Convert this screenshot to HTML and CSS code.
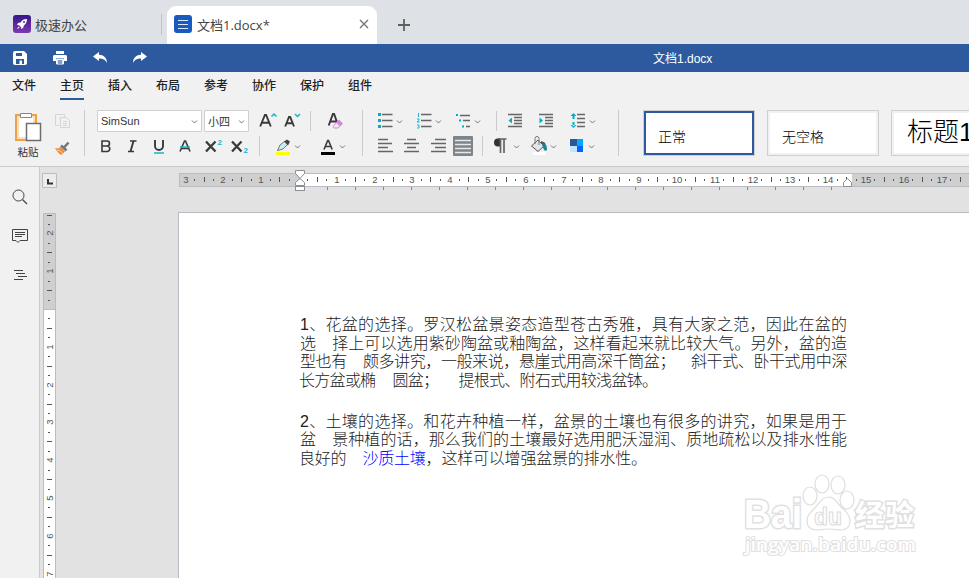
FILE: index.html
```html
<!DOCTYPE html>
<html lang="zh-CN">
<head>
    <meta charset="UTF-8">
    <title>文档1.docx</title>
    <link rel="stylesheet" href="styles.css">
</head>
<body>
    <!-- Window tabs -->
    <div class="tabs">
        <div class="tab home">
            <svg width="18" height="18" viewBox="0 0 18 18">
                <defs><linearGradient id="purple" x1="0" y1="0" x2="0" y2="1"><stop offset="0" stop-color="#35178b"/><stop offset="1" stop-color="#7e39af"/></linearGradient></defs>
                <rect width="18" height="18" rx="3" fill="url(#purple)"/>
                <path d="M14 4c-3 0-5 1-6.500 3.500L5 8 4 10l2 .3L8.300 12.500 8 14l2.200-1 .6-2.500C13 9 14 7 14 4zM5.500 11.500 4 14l2.700-1.300z" fill="#fff"/>
                <circle cx="11" cy="7" r="1" fill="#5a2aa0"/>
            </svg>
            <span>极速办公</span>
        </div>
        <div class="tab active">
            <svg width="18" height="18" viewBox="0 0 18 18">
                <rect width="18" height="18" rx="3" fill="#185abd"/>
                <path d="M4 5.500h10M4 9.500h10M4 13.500h10" stroke="#dce8f8" stroke-width="1"/>
            </svg>
            <span>文档1.docx*</span>
            <svg class="close" width="10" height="10" viewBox="0 0 10 10"><path d="M1 1l8 8M9 1L1 9" stroke="#777" stroke-width="1.400"/></svg>
        </div>
        <svg class="new-tab" width="12" height="12" viewBox="0 0 12 12"><path d="M6 0v12M0 6h12" stroke="#606060" stroke-width="1.800"/></svg>
    </div>

    <!-- Quick access bar -->
    <div class="quick">
        <svg width="14" height="14" viewBox="0 0 14 14"><path d="M2 0h9l3 3v9a2 2 0 0 1-2 2H2a2 2 0 0 1-2-2V2a2 2 0 0 1 2-2z" fill="#fff"/><path d="M3 2h6v3H3zM3 8h8v5H3z" fill="#2d5a9e"/><path d="M6.500 9.500h2.500V13H6.500z" fill="#fff"/></svg>
        <svg width="14" height="14" viewBox="0 0 14 14"><path d="M3 0h8v3H3zM1 4h12l1 1v5h-3V7.500H3V10H0V5z" fill="#fff"/><path d="M3.500 8.500h7V13h-7z" fill="#dce6f4" stroke="#fff"/><path d="M5 10h4M5 12h4" stroke="#2d5a9e"/></svg>
        <svg width="14" height="12" viewBox="0 0 14 12"><path d="M0 4.500 6 0v2.800c4.500 0 8 3 8 8.200-2-3.500-4-4.500-8-4.500V9z" fill="#fff"/></svg>
        <svg width="14" height="12" viewBox="0 0 14 12"><path d="M14 4.500 8 0v2.800C3.500 2.800 0 5.800 0 11c2-3.500 4-4.500 8-4.500V9z" fill="#fff"/></svg>
        <span class="title">文档1.docx</span>
    </div>

    <!-- Menu -->
    <div class="menu">
        <span>文件</span>
        <span class="current">主页</span>
        <span>插入</span>
        <span>布局</span>
        <span>参考</span>
        <span>协作</span>
        <span>保护</span>
        <span>组件</span>
    </div>

    <!-- Toolbar -->
    <div class="toolbar">
        <div class="paste">
            <svg width="28" height="30" viewBox="0 0 28 30">
                <path d="M2 3h20v25H2z" fill="#fff" stroke="#f0a04b" stroke-width="2"/>
                <path d="M4 5h16v21H4z" fill="none" stroke="#fbe1bb" stroke-width="2"/>
                <path d="M6.500 1.500h11v4h-11z" fill="#fff" stroke="#888"/>
                <path d="M12.500 11.500h14v17h-14z" fill="#fff" stroke="#6d6e71" stroke-width="1.500"/>
            </svg>
            <span>粘贴</span>
        </div>
        <div class="clip">
            <svg width="16" height="15" viewBox="0 0 16 15"><path d="M4 11.500H.5V.5h9V3M5.500 3.500h6l3 3v7h-9zM8 7.500h4M8 9.500h4M8 11.500h4" fill="none" stroke="#d5d5d5"/></svg>
            <svg width="16" height="16" viewBox="0 0 16 16"><path d="M0 7l3 .5L5.500 6l4.500 4.500L6.500 14C4 13 2 10.500 0 7z" fill="#f28c38"/><path d="M2 9c3 .5 5 2 6 4" stroke="#fbd3ae" stroke-width="1" fill="none"/><path d="M6 4.500l5.500 5M9 6.500 13.500 1.500" stroke="#777" stroke-width="2.600"/></svg>
        </div>
        <i class="sep tall"></i>

        <div class="group font">
            <div class="row">
                <div class="combo">SimSun<svg class="caret"><use href="#caret"/></svg></div>
                <div class="combo size">小四<svg class="caret"><use href="#caret"/></svg></div>
                <svg class="icon"><path d="M2.200 15.500 6.900 4h1.200L12.800 15.500M4 11.700h7" class="letter"/><path d="M13.500 5.500l2.500-2.500 2.500 2.500" class="cyan"/></svg>
                <svg class="icon"><path d="M3.200 15.500 7 6h1.200L12 15.500M4.500 12.200h6" class="letter"/><path d="M13 3 15.500 5.500 18 3" class="cyan"/></svg>
                <i class="sep"></i>
                <svg class="icon"><path d="M2.700 14.500 6.900 3h1.200L12 14M4.500 10.500h6" class="letter"/><path d="M7 15.500 11 11l5 2-4 4H8z" fill="#f7e8f8" stroke="#d48ad8"/><path d="M13 8.500l4 4-3 3-4-4z" fill="#d48ad8"/></svg>
            </div>
            <div class="row two">
                <svg class="icon"><path d="M6 5h5a2.500 2.500 0 0 1 0 5H6zM6 10h5.500a2.800 2.800 0 0 1 0 5.500H6z" class="letter thin"/></svg>
                <svg class="icon"><path d="M8 5h6.500M6 15.500h6" class="letter thin"/><path d="M11.500 5 8.500 15.500" class="letter"/></svg>
                <svg class="icon"><path d="M6 4v6a4 4 0 0 0 8 0V4" class="letter"/><path d="M5 17h10" class="cyan"/></svg>
                <svg class="icon"><path d="M5 15.500 9.500 5h1l4.500 10.500M7 12.500h6" class="letter thin"/><path d="M5 11h10" class="cyan"/></svg>
                <svg class="icon"><path d="M3 5.500l9.500 10M12.500 5.500l-9.500 10" class="letter bold"/><text x="14.500" y="8.500">2</text></svg>
                <svg class="icon"><path d="M3 5.500l9.500 10M12.500 5.500l-9.500 10" class="letter bold"/><text x="14.500" y="17">2</text></svg>
                <i class="sep"></i>
                <div class="split">
                    <svg class="icon"><path d="M4.500 14.500 7 9l5-4 3 3-5 5z" fill="#c8edf2" stroke="#777"/><path d="M11 5.500 14 3.500l3 2-2 4z" fill="#444"/><path d="M3 16h14v3H3z" fill="#ff0"/></svg>
                    <svg class="caret"><use href="#caret"/></svg>
                </div>
                <div class="split">
                    <svg class="icon"><path d="M6 13.500 9.700 4.500h.8l3.700 9M7.500 10.500h5.500" class="letter thin"/><path d="M3 16h14v3H3z" fill="#000"/></svg>
                    <svg class="caret"><use href="#caret"/></svg>
                </div>
            </div>
        </div>
        <i class="sep tall"></i>

        <div class="group para">
            <div class="row">
                <div class="split">
                    <svg class="icon"><path d="M7 3.500h10.500M7 9.500h10.500M7 15.500h10.500" class="line"/><path d="M3 3.500h3M3 9.500h3M3 15.500h3" class="dot"/></svg>
                    <svg class="caret"><use href="#caret"/></svg>
                </div>
                <div class="split">
                    <svg class="icon"><path d="M7 3.500h10.500M7 9.500h10.500M7 15.500h10.500" class="line"/><path d="M4.500 2v4M3 8h2v1.500L3 11h2.500M3 14h2v3H3" class="cyan thin"/></svg>
                    <svg class="caret"><use href="#caret"/></svg>
                </div>
                <div class="split">
                    <svg class="icon"><path d="M7 4.500h10M10 9.500h7M13 15.500h4" class="line"/><path d="M3 4h2M6 9.500h2M9 15.500h2" class="dot small"/></svg>
                    <svg class="caret"><use href="#caret"/></svg>
                </div>
                <i class="sep"></i>
                <svg class="icon"><path d="M2 3.500h14M8 6.500h8M8 9.500h8M8 12.500h8M2 15.500h14" class="line"/><path d="M6 6.500v6l-3.500-3z" fill="#00aec7"/></svg>
                <svg class="icon"><path d="M2 3.500h14M8 6.500h8M8 9.500h8M8 12.500h8M2 15.500h14" class="line"/><path d="M2.500 6.500v6L6 9.500z" fill="#00aec7"/></svg>
                <div class="split">
                    <svg class="icon"><path d="M9 3.500h8M9 7.500h8M9 11.500h8M9 15.500h8" class="line"/><path d="M5.500 2 8.500 5h-6zM5.500 17l3-3h-6zM4.500 4h2v4h-2zM4.500 11h2v4h-2z" fill="#00aec7"/></svg>
                    <svg class="caret"><use href="#caret"/></svg>
                </div>
            </div>
            <div class="row two">
                <svg class="icon"><path d="M3 3.500h10M3 7.500h14M3 11.500h10M3 15.500h15" class="line"/></svg>
                <svg class="icon"><path d="M6 3.500h9M3 7.500h15M6 11.500h9M3 15.500h15" class="line"/></svg>
                <svg class="icon"><path d="M7 3.500h11M3 7.500h15M7 11.500h11M3 15.500h15" class="line"/></svg>
                <svg class="icon"><rect width="20" height="20" rx="1" fill="#7d858c"/><path d="M2 4.500h16M2 8.500h16M2 12.500h16M2 16.500h16" stroke="#e8e8e8" stroke-width="1.500"/></svg>
                <i class="sep"></i>
                <div class="split wide">
                    <svg class="icon"><path d="M10 2.500H8a3.700 3.700 0 0 0 0 8h2z" fill="#333"/><path d="M8 3h8.500" stroke="#555" stroke-width="1.400"/><path d="M10.500 3v14M14 3v14" stroke="#666" stroke-width="1.700"/></svg>
                    <svg class="caret"><use href="#caret"/></svg>
                </div>
                <div class="split">
                    <svg class="icon"><path d="M4 16h13v3H4z" fill="#fff"/><path d="M2.500 10 9 4l6 6-6 5.500z" fill="#e4e4e4" stroke="#555"/><path d="M6 8V2.500a2 2 0 0 1 4 0V9" fill="none" stroke="#777"/><path d="M12 6c4 0 6 3 6 8-1 1-2 1-3 0z" fill="#138a9c"/><path d="M12 6l4 2" stroke="#555" stroke-width="2"/></svg>
                    <svg class="caret"><use href="#caret"/></svg>
                </div>
                <div class="split">
                    <svg class="icon"><path d="M3 3h7v7H3z" fill="#2b579a"/><path d="M10 3h6v7h-6z" fill="#00a8ff"/><path d="M3 10h7v6H3z" fill="#c0e6ff"/><path d="M10 10h6v6h-6z" fill="#0066ff"/></svg>
                    <svg class="caret"><use href="#caret"/></svg>
                </div>
            </div>
        </div>
        <i class="sep tall"></i>

        <div class="styles">
            <div class="style selected">正常</div>
            <div class="style">无空格</div>
            <div class="style heading">标题1</div>
        </div>
    </div>

    <svg class="defs"><symbol id="caret" viewBox="0 0 9 9"><path d="M2 3.500 4.500 6 7 3.500" fill="none" stroke="#777"/></symbol></svg>

    <!-- Editor -->
    <div class="workspace">
        <div class="side">
            <svg width="16" height="16" viewBox="0 0 16 16"><circle cx="6.500" cy="6.500" r="5.500" fill="none" stroke="#444"/><path d="M10.500 10.500 15 15" stroke="#444" stroke-width="1.200"/></svg>
            <svg width="16" height="16" viewBox="0 0 16 16"><path d="M.5 1.500h15v11H8L6 14.500l-2-2H.5zM3 4.500h10M3 6.500h10M3 8.500h7" fill="none" stroke="#444"/></svg>
            <svg width="16" height="16" viewBox="0 0 16 16"><path d="M2 3.500h9M4 6.500h9M6 9.500h9M2 12.500h9" fill="none" stroke="#444"/></svg>
        </div>
        <div class="left-ruler">
            <svg class="tab-stop" width="15" height="15" viewBox="0 0 15 15"><path d="M.5.5h14v14H.5z" fill="#ececec" stroke="#b9bdc3"/><path d="M6 6v4.500h5" fill="none" stroke="#333" stroke-width="2"/></svg>
            <svg id="vruler" width="13" height="365"></svg>
        </div>
        <div class="canvas">
            <svg id="hruler" width="790" height="24"></svg>
            <div class="page">
                <div class="paragraph">
                    <p>1、花盆的选择。罗汉松盆景姿态造型苍古秀雅，具有大家之范，因此在盆的</p>
                    <p>选<i class="gap"></i>择上可以选用紫砂陶盆或釉陶盆，这样看起来就比较大气。另外，盆的造</p>
                    <p class="tight">型也有<i class="gap"></i>颇多讲究，一般来说，悬崖式用高深千筒盆；<i class="gap"></i>斜干式、卧干式用中深</p>
                    <p class="tighter last">长方盆或椭<i class="gap"></i>圆盆；<i class="gap wide"></i>提根式、附石式用较浅盆钵。</p>
                </div>
                <div class="paragraph">
                    <p>2、土壤的选择。和花卉种植一样，盆景的土壤也有很多的讲究，如果是用于</p>
                    <p>盆<i class="gap"></i>景种植的话，那么我们的土壤最好选用肥沃湿润、质地疏松以及排水性能</p>
                    <p class="snug last">良好的<i class="gap"></i><a>沙质土壤</a>，这样可以增强盆景的排水性。</p>
                </div>
            </div>
        </div>
    </div>

    <!-- Watermark -->
    <svg class="watermark" width="190" height="90" viewBox="0 0 190 90">
        <g fill="#fff" stroke="#dedede" stroke-width="1.200">
            <ellipse cx="69" cy="26" rx="7" ry="9"/>
            <ellipse cx="81" cy="14" rx="7" ry="9"/>
            <ellipse cx="97" cy="15" rx="7" ry="9"/>
            <ellipse cx="106" cy="30" rx="7" ry="9"/>
            <path d="M88 27c6 0 8 6 13 11 5 4 8 8 8 13 0 6-4 9-9 9-5 0-7-1-12-1s-8 1-12 1c-6 0-10-3-10-9s4-9 8-13c4-5 7-11 14-11z"/>
            <text x="73" y="55" font-size="24" font-weight="bold" textLength="28" lengthAdjust="spacingAndGlyphs">du</text>
        </g>
        <g class="outlined">
            <text x="3" y="58" font-size="40" font-weight="bold" textLength="58" lengthAdjust="spacingAndGlyphs">Bai</text>
            <text x="114" y="56" font-size="29" class="cn" textLength="59">经验</text>
            <text x="4" y="81" font-size="18" class="address" textLength="171" lengthAdjust="spacingAndGlyphs">jingyan.baidu.com</text>
        </g>
    </svg>

    <script src="rulers.js"></script>
</body>
</html>
```

FILE: styles.css
```css
body {
    margin: 0;
    width: 969px;
    height: 578px;
    overflow: hidden;
    position: relative;
    display: flex;
    flex-direction: column;
    font-family: "Liberation Sans", "Noto Sans CJK SC", sans-serif;
    font-size: 12px;
    color: #333;
    background-color: #f1f1f1;
}
svg {
    display: block;
    flex: none;
}
.defs {
    position: absolute;
    width: 0;
    height: 0;
}

/* Tabs */
.tabs {
    flex: none;
    height: 44px;
    box-sizing: border-box;
    padding-top: 6px;
    display: flex;
    background-color: #dee1e6;
    font-family: "Open Sans", "Noto Sans CJK SC", sans-serif;
    font-size: 13px;
    color: #444;
}
.tab {
    display: flex;
    align-items: center;
    gap: 4px;
    box-sizing: border-box;
    height: 38px;
}
.home {
    width: 162px;
    padding: 0 0 2px 13px;
    margin-right: 5px;
    background: linear-gradient(#bfc2c7, #bfc2c7) no-repeat right 8px / 1px 21px;
}
.active {
    width: 210px;
    padding: 0 8px 2px 7px;
    gap: 5px;
    background-color: #fff;
    border-radius: 9px 9px 0 0;
}
.active span {
    padding-top: 1px;
}
.close {
    margin-left: auto;
}
.new-tab {
    margin: 13px 0 0 21px;
}

/* Quick access */
.quick {
    flex: none;
    height: 28px;
    display: flex;
    align-items: center;
    gap: 26px;
    padding-left: 13px;
    background-color: #2d5a9e;
    color: #fff;
}
.title {
    margin-left: 480px;
    padding-bottom: 2px;
}

/* Menu */
.menu {
    flex: none;
    height: 28px;
    display: flex;
    gap: 24px;
    padding-left: 12px;
    font-weight: 500;
    color: #222;
    line-height: 28px;
}
.menu span {
    height: 26px;
    width: 24px;
    white-space: nowrap;
}
.menu .current {
    border-bottom: 2px solid #2d5a9e;
}

/* Toolbar */
.toolbar {
    flex: none;
    height: 66px;
    display: flex;
    border-bottom: 1px solid #cbcbcb;
}
.paste {
    flex: none;
    width: 56px;
    display: flex;
    flex-direction: column;
    align-items: center;
    padding-top: 12px;
    box-sizing: border-box;
    font-size: 10.500px;
    line-height: 20px;
}
.clip {
    flex: none;
    width: 28px;
    display: flex;
    flex-direction: column;
    gap: 12px;
    padding-top: 14px;
    margin-left: -1px;
}
.sep {
    width: 1px;
    height: 20px;
    background-color: #cbcbcb;
}
.tall {
    flex: none;
    height: 46px;
    margin-top: 10px;
    margin-left: 1px;
}
.group {
    flex: none;
    padding-top: 10px;
    box-sizing: border-box;
}
.font {
    width: 276px;
    padding-left: 12px;
}
.para {
    width: 254px;
    padding-left: 12px;
}
.row {
    display: grid;
    height: 22px;
    align-items: center;
    justify-content: start;
}
.row.two {
    height: 20px;
    margin-top: 4px;
}
.font .row {
    grid-template-columns: 107px 54px 24px 28px 16px 20px;
}
.font .two {
    margin-left: -1px;
    grid-template-columns: 26px 27px 26px 28px 26px 30px 14px 45px 29px;
}
.para .row {
    grid-template-columns: 39px 39px 43px 10px 31px 31px 29px;
}
.para .two {
    grid-template-columns: 26px 27px 25px 29px 8px 39px 38px 29px;
}
.combo {
    width: 105px;
    height: 22px;
    box-sizing: border-box;
    padding: 0 2px 0 3px;
    display: flex;
    align-items: center;
    justify-content: space-between;
    background-color: #fff;
    border: 1px solid #cfcfcf;
    border-radius: 1px;
    font-size: 11px;
}
.combo.size {
    width: 45px;
}
.icon {
    width: 20px;
    height: 20px;
}
.icon text {
    font-size: 8px;
    font-weight: bold;
    fill: #16b4cc;
}
.caret {
    width: 9px;
    height: 9px;
}
.split {
    display: flex;
    align-items: center;
}
.split.wide {
    gap: 2px;
}
.letter {
    fill: none;
    stroke: #3a3a3a;
    stroke-width: 1.900;
}
.cyan {
    fill: none;
    stroke: #16b4cc;
    stroke-width: 1.500;
}
.letter.thin {
    stroke-width: 1.600;
}
.letter.bold {
    stroke-width: 2.300;
}
.cyan.thin {
    stroke-width: 1;
}
.line {
    stroke: #666;
    stroke-width: 1.400;
}
.dot {
    stroke: #00aec7;
    stroke-width: 3;
}
.dot.small {
    stroke-width: 2;
}
.styles {
    display: flex;
    gap: 12px;
    padding: 10px 0 0 24px;
}
.style {
    flex: none;
    width: 112px;
    height: 46px;
    box-sizing: border-box;
    padding: 6px 0 0 14px;
    border: 1px solid #cfcfcf;
    box-shadow: inset 0 0 0 2px #f1f1f1;
    background-color: #fff;
    font-family: "Noto Sans CJK SC", sans-serif;
    font-weight: 300;
    font-size: 14px;
    line-height: 38px;
    color: #000;
    white-space: nowrap;
}
.selected {
    box-shadow: inset 0 0 0 2px #2d5a9e;
}
.heading {
    font-family: "Liberation Sans", "Noto Sans CJK SC", sans-serif;
    font-size: 26px;
    padding: 2px 0 0 15px;
}

/* Editor */
.workspace {
    flex: 1;
    min-height: 0;
    display: flex;
    overflow: hidden;
    background-color: #e2e2e2;
}
.side {
    flex: none;
    width: 39px;
    border-right: 1px solid #cbcbcb;
    background-color: #f1f1f1;
    display: flex;
    flex-direction: column;
    align-items: center;
    gap: 23px;
    padding-top: 22px;
}
.left-ruler {
    flex: none;
    width: 139px;
    padding: 6px 0 0 2px;
    box-sizing: border-box;
}
#vruler {
    margin: 25px 0 0 1px;
}
.canvas {
    flex: none;
    padding-top: 2px;
    margin-left: -1px;
}
#hruler {
    margin-left: 1px;
}
.page {
    margin-top: 19px;
    height: 366px;
    box-sizing: border-box;
    width: 791px;
    padding: 103px 0 0 121px;
    border: 1px solid #b9bdc3;
    border-width: 1px 0 0 1px;
    background-color: #fff;
}
.paragraph {
    width: 547px;
    margin-bottom: 22px;
    font-weight: 300;
    font-size: 16px;
    line-height: 18.700px;
    color: #222;
}
.paragraph p {
    margin: 0;
    height: 18.700px;
    white-space: nowrap;
    text-align-last: justify;
}
.paragraph .tight {
    letter-spacing: -0.450px;
}
.paragraph .tighter {
    letter-spacing: -0.700px;
}
.paragraph .snug {
    letter-spacing: -0.200px;
}
.paragraph .last {
    text-align-last: left;
    margin-left: -1px;
}
.gap {
    display: inline-block;
    width: 16px;
}
.tighter .gap {
    width: 17px;
}
.tighter .gap.wide {
    width: 20px;
}
.paragraph a {
    color: #00f;
}
#hruler text,
#vruler text {
    font-size: 9.500px;
    fill: #555;
    text-anchor: middle;
}

/* Watermark */
.watermark {
    position: absolute;
    left: 741px;
    top: 470px;
    font-family: "Liberation Sans", sans-serif;
}
.outlined {
    fill: #fff;
    stroke: #e0e0e0;
    stroke-width: 3px;
    paint-order: stroke;
}
.watermark .cn {
    font-family: "Noto Sans CJK SC", sans-serif;
    font-weight: bold;
}
.watermark .address {
    font-family: "Open Sans", sans-serif;
    font-weight: 600;
    stroke-width: 2px;
}
```

FILE: rulers.js
```javascript
const CM = 37.8;

function add(svg, name, attrs, text) {
    const el = document.createElementNS('http://www.w3.org/2000/svg', name);
    for (const key in attrs) el.setAttribute(key, attrs[key]);
    if (text) el.textContent = text;
    svg.appendChild(el);
}

// Horizontal ruler
const h = document.getElementById('hruler');
add(h, 'rect', { x: 0.5, y: 4.5, width: 800, height: 13, fill: '#cfcfcf', stroke: '#b9bdc3' });
add(h, 'rect', { x: 121, y: 5, width: 552, height: 12, fill: '#fff' });
for (let q = -12; q <= 71; q++) {
    const x = Math.round(120 + q * CM / 4);
    if (q === 0) continue;
    if (q % 4 === 0) {
        add(h, 'text', { x: x, y: 14 }, String(Math.abs(q / 4)));
    } else {
        const len = q % 2 === 0 ? 5 : 2;
        add(h, 'rect', { x: x - 1, y: Math.floor(11 - len / 2), width: 1, height: len, fill: '#555' });
    }
}
// Default tab stops
for (let i = 0; i < 19; i++) {
    add(h, 'rect', { x: Math.round(148 + i * 28), y: 18, width: 1, height: 3, fill: '#888' });
}
// Indent markers
add(h, 'path', { d: 'M116.500 1.500h9v3l-4.500 5 4.500 4v3h-9v-3l4.500-4-4.500-5z', fill: '#fff', stroke: '#8b9097' });
add(h, 'rect', { x: 116.5, y: 17.5, width: 9, height: 4, fill: '#fff', stroke: '#8b9097' });
add(h, 'path', { d: 'M664.500 17.500v-4l4-4 4 4v4z', fill: '#fff', stroke: '#8b9097' });

// Vertical ruler
const v = document.getElementById('vruler');
add(v, 'rect', { x: 0.5, y: 0.5, width: 12, height: 380, fill: '#fff', stroke: '#b9bdc3' });
add(v, 'rect', { x: 0.5, y: 0.5, width: 12, height: 96, fill: '#cfcfcf', stroke: '#b9bdc3' });
for (let q = -10; q <= 28; q++) {
    const y = Math.round(96 + q * CM / 4);
    if (q === 0) continue;
    if (q % 4 === 0) {
        add(v, 'text', { transform: `translate(9.5 ${y}) rotate(-90)` }, String(Math.abs(q / 4)));
    } else {
        const len = q % 2 === 0 ? 5 : 2;
        add(v, 'rect', { x: Math.floor(6.5 - len / 2), y: y, width: len, height: 1, fill: '#555' });
    }
}
```
